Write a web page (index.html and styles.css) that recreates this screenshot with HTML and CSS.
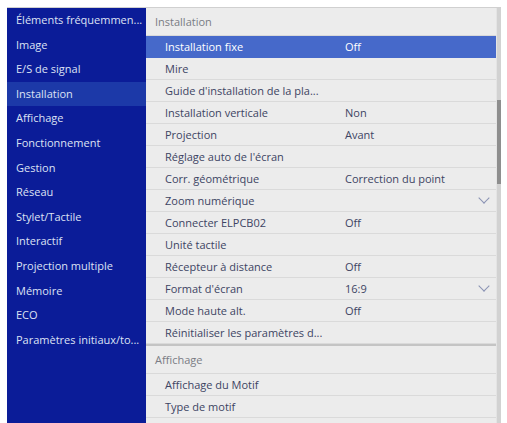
FILE: index.html
```html
<!DOCTYPE html>
<html lang="fr">
<head>
  <meta charset="UTF-8">
  <meta name="viewport" content="width=device-width, initial-scale=1.0">
  <title>Installation</title>
  <link rel="stylesheet" href="styles.css">
</head>
<body>
  <div id="menu">
    <ul id="categories">
      <li>Éléments fréquemmen...</li>
      <li>Image</li>
      <li>E/S de signal</li>
      <li class="current">Installation</li>
      <li>Affichage</li>
      <li>Fonctionnement</li>
      <li>Gestion</li>
      <li>Réseau</li>
      <li>Stylet/Tactile</li>
      <li>Interactif</li>
      <li>Projection multiple</li>
      <li>Mémoire</li>
      <li>ECO</li>
      <li>Paramètres initiaux/to...</li>
    </ul>

    <div id="settings">
      <div class="section">
        <div class="section-title">Installation</div>
        <div class="row selected"><span>Installation fixe</span><span>Off</span></div>
        <div class="row"><span>Mire</span></div>
        <div class="row"><span>Guide d'installation de la pla...</span></div>
        <div class="row"><span>Installation verticale</span><span>Non</span></div>
        <div class="row"><span>Projection</span><span>Avant</span></div>
        <div class="row"><span>Réglage auto de l'écran</span></div>
        <div class="row"><span>Corr. géométrique</span><span>Correction du point</span></div>
        <div class="row"><span>Zoom numérique</span><span></span><span class="chevron"></span></div>
        <div class="row"><span>Connecter ELPCB02</span><span>Off</span></div>
        <div class="row"><span>Unité tactile</span></div>
        <div class="row"><span>Récepteur à distance</span><span>Off</span></div>
        <div class="row"><span>Format d'écran</span><span>16:9</span><span class="chevron"></span></div>
        <div class="row"><span>Mode haute alt.</span><span>Off</span></div>
        <div class="row"><span>Réinitialiser les paramètres d...</span></div>
      </div>
      <div class="section">
        <div class="section-title">Affichage</div>
        <div class="row"><span>Affichage du Motif</span></div>
        <div class="row"><span>Type de motif</span></div>
        <div class="row"></div>
      </div>
    </div>

    <div id="scrollbar"><div class="thumb"></div></div>
  </div>
</body>
</html>
```

FILE: styles.css
```css
body {
  margin: 0;
  background: #fff;
  font-family: "Open Sans", "Noto Sans", sans-serif;
  font-size: 11px;
  overflow: hidden;
}

#menu {
  display: flex;
  margin: 7px 0 0 7px;
  width: 494px;
  height: 416px;
  background: #ececec;
  border-top: 1px solid #d0d0d0;
  box-sizing: border-box;
  overflow: hidden;
}

#categories {
  list-style: none;
  margin: 0;
  padding: 0;
  width: 139px;
  flex-shrink: 0;
  background: #0b1c98;
  color: #dde2f4;
}

#categories li {
  height: 24.6px;
  line-height: 24px;
  padding-left: 9px;
  white-space: nowrap;
}

#categories li.current {
  background: #1c39a8;
}

#settings {
  flex: 1;
  min-width: 0;
}

.section + .section {
  border-top: 2px solid #c4c4c4;
}

.section-title {
  height: 27px;
  line-height: 27px;
  padding-left: 9px;
  color: #7a7c84;
  border-bottom: 1px solid #d9d9d9;
}

.section .row {
  display: grid;
  grid-template-columns: 180px 1fr 24px;
  align-items: center;
  height: 22px;
  padding-left: 19px;
  color: #3d4463;
  border-bottom: 1px solid #dadada;
  box-sizing: border-box;
  white-space: nowrap;
}

.section .row.selected {
  background: #4669ca;
  color: #fff;
  border-bottom-color: #4669ca;
}

/* small down arrow for rows that open a list */
.chevron {
  width: 7px;
  height: 7px;
  border-right: 1px solid #8a93b4;
  border-bottom: 1px solid #8a93b4;
  transform: rotate(45deg);
  margin: -5px 0 0 8px;
}

#scrollbar {
  width: 4px;
  flex-shrink: 0;
  background: #d2d2d2;
  border-left: 1px solid #e4e4e4;
}

#scrollbar .thumb {
  margin-top: 92px;
  height: 84px;
  background: #8e8e8e;
}
```
